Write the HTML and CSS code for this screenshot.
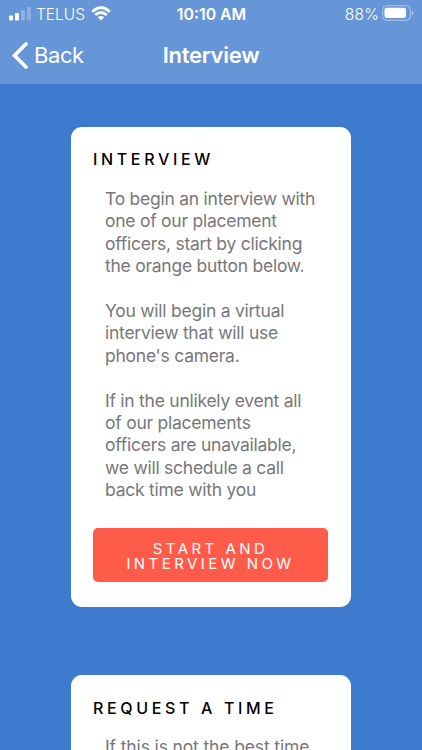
FILE: index.html
```html
<!DOCTYPE html>
<html lang="en">
<head>
<meta charset="utf-8">
<title>Interview</title>
<link rel="stylesheet" href="styles.css">
</head>
<body>
<header>
  <div class="status">
    <div class="carrier">
      <svg class="signal" width="22" height="15" viewBox="0 0 22 15" fill="#fff"><rect x="0" y="9.500" width="4" height="5" rx="1"/><rect x="6" y="7" width="4" height="7.500" rx="1"/><rect x="12" y="4" width="4" height="10.500" rx="1" opacity=".25"/><rect x="18" y="1" width="4" height="13.500" rx="1" opacity=".25"/></svg>
      <span class="network">TELUS</span>
      <svg class="wifi" width="20" height="15" viewBox="0 0 20 15" fill="none" stroke="#fff" stroke-width="2.700"><path d="M1.200 5.700Q10-2.300 18.800 5.700M4.200 9Q10 4 15.800 9"/><path d="M10 14.500L6.800 11.300Q10 8.500 13.200 11.300Z" fill="#fff" stroke="none"/></svg>
    </div>
    <span class="time">10:10 AM</span>
    <div class="power"><span class="percent">88%</span>
      <svg width="32" height="16" viewBox="0 0 32 16"><rect x=".7" y=".7" width="27.600" height="14.600" rx="4" fill="none" stroke="#fff" opacity=".45"/><rect x="2.500" y="2.700" width="21.500" height="10.300" rx="2" fill="#fff"/><path d="M29.800 5.500Q31.500 6 31.500 8T29.800 10.500Z" fill="#fff" opacity=".5"/></svg>
    </div>
  </div>
  <nav><a class="back"><svg width="18" height="30" viewBox="0 0 18 30"><path d="M16 4L4.500 15.500L16 27" fill="none" stroke="#fff" stroke-width="3.700" stroke-linecap="round"/></svg><span class="backlabel">Back</span></a><h1><span>Interview</span></h1></nav>
</header>
<main>
  <section class="card">
    <h2><span class="t1">INTERVIEW</span></h2>
    <div class="copy">
      <p>To begin an interview with<br>one of our placement<br>officers, start by clicking<br>the orange button below.</p>
      <p>You will begin a virtual<br>interview that will use<br>phone's camera.</p>
      <p>If in the unlikely event all<br>of our placements<br>officers are unavailable,<br>we will schedule a call<br>back time with you</p>
    </div>
    <button>START AND<br>INTERVIEW NOW</button>
  </section>
  <section class="card card-next">
    <h2><span class="t2">REQUEST A TIME</span></h2>
    <div class="copy"><p>If this is not the best time</p></div>
  </section>
</main>
</body>
</html>
```
FILE: styles.css
```css
* { box-sizing: border-box; }
body { margin: 0; height: 750px; overflow: hidden; background: #3e7bce; font-family: Inter, "Liberation Sans", sans-serif; }
header { height: 84px; background: #6796d8; color: #fff; }
.status { height: 28px; display: grid; grid-template-columns: 1fr auto 1fr; align-items: center; padding: 0 8px 0 9px; font-size: 15.5px; }
.carrier, .power { display: flex; align-items: center; }
.signal { margin-top: -1px; }
.network { font-size: 15.5px; font-weight: 300; margin: 0 6px 0 5px; }
.wifi { margin-top: -2px; }
.time { font-weight: 600; font-size: 15.8px; }
.power { justify-content: flex-end; gap: 3px; }
.power svg { margin-top: -2px; }
.percent { font-weight: 300; letter-spacing: .3px; }
nav { height: 54px; display: grid; grid-template-columns: 1fr auto 1fr; align-items: center; padding: 0 0 0 10px; }
.back { display: flex; align-items: center; gap: 6px; font-size: 22px; letter-spacing: -.4px; }
h1 { margin: 0 0 0 -10px; font-size: 22px; font-weight: 600; letter-spacing: -.25px; }
main { height: 666px; padding: 43px 71px 0; overflow: hidden; }
.card { height: 480px; margin-bottom: 68px; padding: 22px 22px 0; border-radius: 11px; background: #fff; }
.card-next { height: 75px; margin-bottom: 0; padding-top: 23px; border-radius: 11px 11px 0 0; overflow: hidden; }
h2 { margin: 0 0 19px; height: 20px; font-size: 16px; line-height: 20px; font-weight: 500; letter-spacing: 3.65px; color: #000; white-space: nowrap; }
.card-next h2 { margin-bottom: 18px; }
.copy { padding-left: 12px; color: #77777a; font-size: 17.5px; line-height: 22.4px; letter-spacing: -.25px; white-space: nowrap; }
.card-next .copy { letter-spacing: -.13px; }
p { margin: 0 0 22.4px; }
button { display: block; width: 235px; height: 54px; margin-top: 26.4px; padding: 1px 0 0; border: 0; border-radius: 5px; background: #ff5b4a; color: #fff; font: 15px/15px Inter, sans-serif; letter-spacing: 3.45px; }
```
